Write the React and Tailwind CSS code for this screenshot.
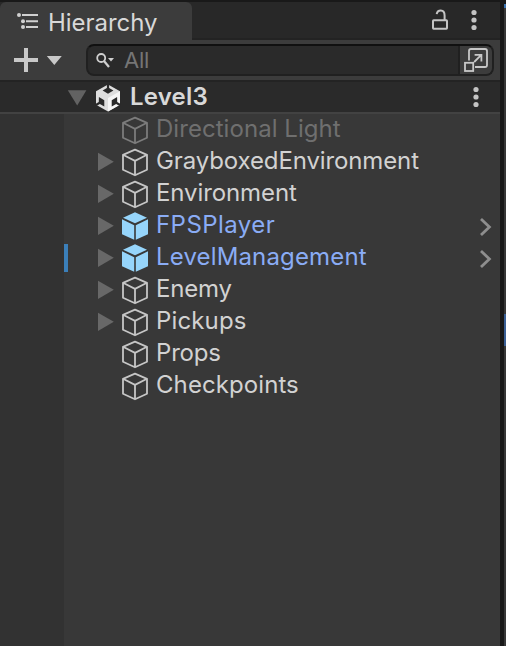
import React from "react";

const items = [
  { name: "Directional Light", kind: "disabled", fold: false, spacing: "tracking-[0.05px]" },
  { name: "GrayboxedEnvironment", kind: "normal", fold: true, spacing: "tracking-[-0.12px]" },
  { name: "Environment", kind: "normal", fold: true, spacing: "tracking-[-0.1px]" },
  { name: "FPSPlayer", kind: "prefab", fold: true, spacing: "tracking-[0.45px]" },
  { name: "LevelManagement", kind: "prefab", fold: true, marked: true, spacing: "tracking-[0.15px]" },
  { name: "Enemy", kind: "normal", fold: true, spacing: "tracking-[-0.2px]" },
  { name: "Pickups", kind: "normal", fold: true, spacing: "tracking-[0.15px]" },
  { name: "Props", kind: "normal", fold: false, spacing: "tracking-[-0.2px]" },
  { name: "Checkpoints", kind: "normal", fold: false, spacing: "tracking-[0.08px]" },
];

const textColors = {
  disabled: "text-[#6f6f6f]",
  normal: "text-[#d2d2d2]",
  prefab: "text-[#8aacf5]",
};

function Cube({ kind }) {
  if (kind === "prefab") {
    return (
      <svg className="h-8 w-8 shrink-0" viewBox="0 0 32 32" fill="#96d5fb">
        <path d="M16 2.2 28 7.7 16 13.3 4 7.7Z" />
        <path d="M3 9.3 15.2 15.2V29.8L3 24.2Z" />
        <path d="M29 9.3 16.8 15.2V29.8L29 24.2Z" />
      </svg>
    );
  }
  return (
    <svg
      className={`h-8 w-8 shrink-0 ${kind === "disabled" ? "text-[#7c7c7c]" : "text-[#c6c6c6]"}`}
      viewBox="0 0 32 32"
      fill="none"
      stroke="currentColor"
      strokeWidth="1.8"
      strokeLinejoin="round"
    >
      <path d="M16 3.7 28 8.8V23.8L16 29.3 4 23.8V8.8ZM4 8.8 16 14.9 28 8.8M16 14.9V29.3" />
    </svg>
  );
}

function Dots() {
  return (
    <svg className="h-6 w-6 shrink-0" viewBox="0 0 24 24" fill="#c4c4c4">
      <circle cx="12" cy="4.5" r="2.6" />
      <circle cx="12" cy="12" r="2.6" />
      <circle cx="12" cy="19.5" r="2.6" />
    </svg>
  );
}

function TabBar() {
  return (
    <div className="flex h-[38px] bg-[#282828]">
      <div className="flex w-[192px] items-center rounded-t-md bg-[#3c3c3c] pl-4">
        <svg className="h-6 w-6" viewBox="0 0 24 24" fill="#d0d0d0">
          <circle cx="3" cy="6" r="2" />
          <circle cx="7" cy="12.2" r="2" />
          <circle cx="7" cy="18" r="2" />
          <path d="M6 5h16v2H6zM10 11.2h12v2H10zM10 17h12v2H10z" />
        </svg>
        <span className="ml-2 whitespace-nowrap pt-1 text-2xl leading-[34px] tracking-[-0.03px] text-[#d8d8d8]">Hierarchy</span>
      </div>
      <div className="flex flex-1 items-center justify-end border-b-2 border-[#232323] pr-[14px]">
        <svg className="mr-[10px] h-6 w-6" viewBox="0 0 24 24" fill="none" stroke="#c4c4c4" strokeWidth="2">
          <rect x="5" y="12.3" width="14" height="8.4" rx="0.6" />
          <path d="M16.6 12V7.8C16.6 4.5 15.4 2.6 12.8 2.6C10.6 2.6 9.1 3.8 8.7 6.2" />
        </svg>
        <Dots />
      </div>
    </div>
  );
}

function Toolbar() {
  return (
    <div className="flex h-10 items-center bg-[#3c3c3c] pl-[14px] pr-[6px]">
      <svg className="h-8 w-[48px] shrink-0" viewBox="0 0 48 32" fill="#c8c8c8">
        <path d="M10 4h4v10h10v4H14v10h-4V18H0v-4h10zM32.8 12h15L40.3 21z" />
      </svg>
      <div className="ml-6 flex h-8 flex-1 items-center overflow-hidden rounded-lg border-2 border-[#202020] border-t-[#101010] bg-[#2a2a2a]">
        <svg className="ml-2 h-5 w-5 shrink-0" viewBox="0 0 20 20" fill="none" stroke="#cfcfcf" strokeWidth="1.8">
          <circle cx="5.2" cy="8" r="4" />
          <path d="m8 11 5 6" strokeWidth="2.2" />
          <path d="M12 8h6l-3 3.4z" fill="#cfcfcf" stroke="none" />
        </svg>
        <span className="ml-2 flex-1 text-[22px] leading-7 tracking-[-0.2px] text-[#757575]">All</span>
        <div className="flex h-full w-[34px] items-center border-l-2 border-[#202020] bg-[#3c3c3c]">
          <svg className="h-7 w-8" viewBox="0 0 32 28" fill="none" stroke="#c8c8c8" strokeWidth="1.8">
            <path d="M9 14.5V5.1Q9 3 11 3H25Q27 3 27 5.1V18.9Q27 21 25 21H15" />
            <rect x="5" y="16.8" width="8.2" height="8.2" />
            <path d="M14.2 16 20.8 9.4M14.6 8.9H21.4V15.4" />
          </svg>
        </div>
      </div>
    </div>
  );
}

function SceneRow() {
  return (
    <div className="flex h-[34px] items-center border-b-2 border-t-2 border-b-[#424242] border-t-[#232323] bg-[#2a2a2a] pl-[67px] pr-3">
      <svg className="h-5 w-5 shrink-0" viewBox="0 0 20 20" fill="#626262">
        <path d="M.8 3.3h18.6L10.2 18.4z" />
      </svg>
      <svg className="ml-[5px] h-8 w-8 shrink-0" viewBox="0 0 32 32">
        <path d="M16 3.4 28 10.2V23.8L16 30.6 4 23.8V10.2Z" fill="#dedede" />
        <path d="M16 17 28 10.2V23.8L16 30.6Z" fill="#f6f6f6" />
        <g fill="#2a2a2a">
          <path d="M14.9 3V7L10.6 9.6 16 12.7 21.4 9.6 17.1 7V3Z" />
          <path d="M14.9 3V7L10.6 9.6 16 12.7 21.4 9.6 17.1 7V3Z" transform="rotate(120 16 17)" />
          <path d="M14.9 3V7L10.6 9.6 16 12.7 21.4 9.6 17.1 7V3Z" transform="rotate(240 16 17)" />
        </g>
      </svg>
      <span className="ml-[6px] flex-1 text-2xl font-semibold leading-[30px] tracking-[0.2px] text-[#d8d8d8]">Level3</span>
      <Dots />
    </div>
  );
}

function ItemRow({ item }) {
  return (
    <div className={`flex h-8 items-center pr-2 ${textColors[item.kind]}`}>
      <div className={`h-7 w-1 ${item.marked ? "bg-[#3b7fb9]" : ""}`} />
      <svg className="ml-[29px] h-5 w-5 shrink-0" viewBox="0 0 20 20" fill="#686868">
        {item.fold && <path d="M1 .8v18.2L16.8 9.8z" />}
      </svg>
      <span className="ml-[2px] flex"><Cube kind={item.kind} /></span>
      <span className={`ml-[5px] flex-1 whitespace-nowrap pb-[2px] text-2xl leading-[30px] ${item.spacing}`}>{item.name}</span>
      {item.kind === "prefab" && (
        <svg className="h-6 w-5 shrink-0" viewBox="0 0 20 24" fill="none" stroke="#8e8e8e" strokeWidth="2.8">
          <path d="m9 5 8.4 8L9 21" />
        </svg>
      )}
    </div>
  );
}

export default function App() {
  return (
    <div className="flex h-[646px] w-[506px] overflow-hidden bg-[#191919] font-['Inter',sans-serif]">
      <div className="flex w-[500px] flex-col overflow-hidden pt-[2px]">
        <TabBar />
        <Toolbar />
        <SceneRow />
        <div className="flex flex-1">
          <div className="w-16 bg-[#323232]" />
          <div className="flex-1 bg-[#383838]">
            {items.map((item) => (
              <ItemRow key={item.name} item={item} />
            ))}
          </div>
        </div>
      </div>
      <div className="ml-1 flex w-[2px] flex-col pt-1">
        <div className="h-1 bg-[#3a72b0]" />
        <div className="h-8 bg-[#383838]" />
        <div className="flex-1 bg-[#383838]">
          <div className="mt-[274px] h-8 bg-[#3a5f95]" />
        </div>
      </div>
    </div>
  );
}
